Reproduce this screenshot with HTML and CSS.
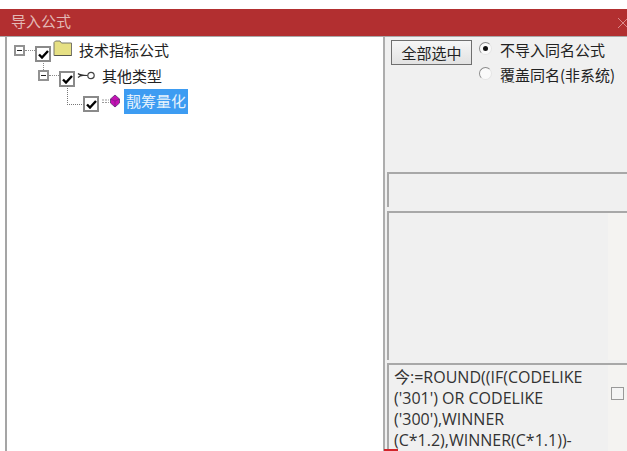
FILE: index.html
```html
<!DOCTYPE html>
<html lang="zh-CN">

<head>
    <meta charset="UTF-8" />
    <title>导入公式</title>
    <link rel="stylesheet" href="styles.css">
</head>

<body>
    <div class="window">
        <div class="titlebar">
            <span class="title">导入公式</span>
            <svg class="close" width="12" height="12" viewBox="0 0 12 12">
                <path d="M1 1L11 11M11 1L1 11" stroke="#d98a8a" stroke-width="1" fill="none" />
            </svg>
        </div>
        <div class="content">
            <div class="tree">
                <div class="row row1">
                    <span class="expander"></span>
                    <span class="dots"></span>
                    <span class="check">
                        <svg width="11" height="9" viewBox="0 0 11 9"><path d="M1 4.5L4 7.5L10 1" stroke="#000" stroke-width="2.4" fill="none" /></svg>
                    </span>
                    <svg class="folder" width="20" height="17" viewBox="0 0 20 17">
                        <path d="M1 15.5V2.5L2.5 1H7L8.5 3H18.5V15.5Z" fill="#e6e084" stroke="#77766a" />
                        <path d="M1.5 15H18.5V16H1.5Z" fill="#55554c" />
                    </svg>
                    <span class="label label1">技术指标公式</span>
                </div>
                <div class="row row2">
                    <span class="expander"></span>
                    <span class="dots"></span>
                    <span class="check">
                        <svg width="11" height="9" viewBox="0 0 11 9"><path d="M1 4.5L4 7.5L10 1" stroke="#000" stroke-width="2.4" fill="none" /></svg>
                    </span>
                    <svg class="key" width="19" height="9" viewBox="0 0 19 9">
                        <circle cx="14" cy="4.5" r="3.2" fill="#fff" stroke="#444" stroke-width="1.2" />
                        <path d="M1 2.5C3 4.5 5 4.5 10.5 4.5M1 6.5C2.5 5 4 4.5 6 4.5" stroke="#333" stroke-width="1.2" fill="none" />
                    </svg>
                    <span class="label label2">其他类型</span>
                </div>
                <div class="row row3">
                    <span class="check">
                        <svg width="11" height="9" viewBox="0 0 11 9"><path d="M1 4.5L4 7.5L10 1" stroke="#000" stroke-width="2.4" fill="none" /></svg>
                    </span>
                    <svg class="gem" width="19" height="14" viewBox="0 0 19 14">
                        <path d="M1 6H8M1 8.5H8" stroke="#9a9a9a" stroke-width="1" stroke-dasharray="2 1" />
                        <path d="M14 1L18.5 5V9L14 13L9.5 9V5Z" fill="#c512b4" stroke="#5a2a70" stroke-width="0.8" />
                        <path d="M9.5 5L14 7L18.5 5M14 7V13" fill="none" stroke="#7d1a86" stroke-width="0.7" />
                    </svg>
                    <span class="label selected">靓筹量化</span>
                </div>
            </div>
            <div class="side">
                <div class="options">
                    <button class="btn">全部选中</button>
                    <div class="radios">
                        <div class="radio-row"><span class="radio on"></span>不导入同名公式</div>
                        <div class="radio-row"><span class="radio"></span>覆盖同名(非系统)</div>
                    </div>
                </div>
                <div class="box box-input"></div>
                <div class="box box-info"><div class="strip"></div></div>
                <div class="box box-code">
                    <p class="code">今:=ROUND((IF(CODELIKE ('301') OR CODELIKE ('300'),WINNER (C*1.2),WINNER(C*1.1))-</p>
                    <div class="strip"><span class="small-check"></span></div>
                </div>
            </div>
        </div>
    </div>
    <div class="red-mark"></div>
</body>

</html>
```

FILE: styles.css
```css
* {
    box-sizing: border-box;
}

html,
body {
    margin: 0;
    height: 451px;
    overflow: hidden;
    background: #fff;
}

body {
    padding-top: 9px;
    font-family: "Open Sans", "Noto Sans CJK SC", sans-serif;
    color: #222;
}

.window {
    height: 442px;
    display: flex;
    flex-direction: column;
}

.titlebar {
    height: 27px;
    background-color: #b22f30;
    display: flex;
    align-items: center;
    justify-content: space-between;
    padding: 0 0 4px 11px;
    flex-shrink: 0;
}

.title {
    font-family: "Noto Sans CJK SC", sans-serif;
    font-size: 15px;
    color: #e3b9b6;
}

.close {
    margin: 4px -2px 0 0;
}

.content {
    flex: 1;
    display: flex;
    min-height: 0;
    border-top: 1px solid #a9a9a9;
}

.tree {
    width: 380px;
    margin-left: 5px;
    padding-top: 2px;
    background: #fff;
    border-left: 2px solid #a5a5a5;
    border-right: 2px solid #adadad;
    flex-shrink: 0;
    font-family: "Noto Sans CJK SC", sans-serif;
}

.row {
    height: 25px;
    display: flex;
    align-items: center;
    position: relative;
}

.row1 {
    padding-left: 7px;
}

.row2 {
    padding-left: 31px;
}

.row3 {
    padding-left: 76px;
}

.row2::before {
    content: "";
    position: absolute;
    left: 36px;
    top: -3px;
    height: 9px;
    border-left: 1px dotted #8a8a8a;
}

.row3::before {
    content: "";
    position: absolute;
    left: 60px;
    top: -3px;
    width: 16px;
    height: 18px;
    border-left: 1px dotted #777;
    border-bottom: 1px dotted #777;
}

.expander {
    width: 11px;
    height: 11px;
    border: 2px solid #929292;
    position: relative;
    margin-top: -2px;
    background: #fff;
}

.expander::after {
    content: "";
    position: absolute;
    left: 1px;
    top: 3px;
    width: 5px;
    height: 1px;
    background: #222;
}

.dots {
    width: 10px;
    margin-top: -2px;
    border-top: 1px dotted #8a8a8a;
}

.check {
    width: 16px;
    height: 16px;
    border: 2px solid #8a8a8a;
    background: #fff;
    display: flex;
    align-items: center;
    justify-content: center;
    margin-top: 5px;
}

.folder {
    margin: -7px 0 0 2px;
}

.key {
    margin: -2px 0 0 2px;
}

.gem {
    margin: -1px 0 0 2px;
}

.label {
    font-size: 15px;
    line-height: 22px;
}

.label1 {
    margin: -3px 0 0 6px;
}

.label2 {
    margin: -1px 0 0 6px;
}

.selected {
    margin: -1px 0 0 4px;
    height: 25px;
    width: 64px;
    line-height: 24px;
    text-align: center;
    background-color: #3d9cf2;
    color: #e8f3fc;
}

.side {
    flex: 1;
    min-width: 0;
    background: #f0f0f0;
    display: flex;
    flex-direction: column;
    padding-left: 2px;
}

.options {
    height: 135px;
    display: flex;
    align-items: flex-start;
    padding: 3px 0 0 4px;
    font-family: "Noto Sans CJK SC", sans-serif;
    font-size: 15px;
}

.btn {
    width: 81px;
    height: 25px;
    padding: 0;
    font-family: inherit;
    font-size: 15px;
    color: #222;
    border: 1px solid #6f6f6f;
    background: linear-gradient(#f6f6f6, #e2e2e2);
}

.radios {
    margin-left: 7px;
}

.radio-row {
    height: 25px;
    line-height: 19px;
    display: flex;
    align-items: flex-start;
}

.radio {
    width: 13px;
    height: 13px;
    margin: 2px 8px 0 0;
    border-radius: 50%;
    border: 1px solid #b5b5b5;
    border-top-color: #8c8c8c;
    border-left-color: #8c8c8c;
    border-right-color: #e4e4e4;
    border-bottom-color: #e4e4e4;
    background: #fafafa;
    position: relative;
    flex-shrink: 0;
}

.radio.on::after {
    content: "";
    position: absolute;
    left: 3px;
    top: 3px;
    width: 5px;
    height: 5px;
    border-radius: 50%;
    background: #111;
}

.box {
    border-top: 2px solid #a8a8a8;
    border-left: 2px solid #a8a8a8;
    display: flex;
    background: #f0f0f0;
}

.box-input {
    height: 35px;
    margin-bottom: 4px;
}

.box-info {
    height: 149px;
    margin-bottom: 3px;
    justify-content: flex-end;
}

.box-code {
    flex: 1;
    min-height: 0;
    overflow: hidden;
}

.strip {
    width: 19px;
    padding-left: 3px;
    margin-left: auto;
    background: #f4f3f1;
    flex-shrink: 0;
}

.code {
    margin: 0;
    padding: 2px 0 0 5px;
    width: 210px;
    font-size: 16px;
    line-height: 21px;
    color: #333;
}

.small-check {
    display: block;
    width: 13px;
    height: 13px;
    margin-top: 22px;
    border: 1px solid #999;
    background: #f4f4f4;
}

.red-mark {
    position: absolute;
    left: 384px;
    top: 449px;
    width: 14px;
    height: 2px;
    background: #d2242a;
}
```
